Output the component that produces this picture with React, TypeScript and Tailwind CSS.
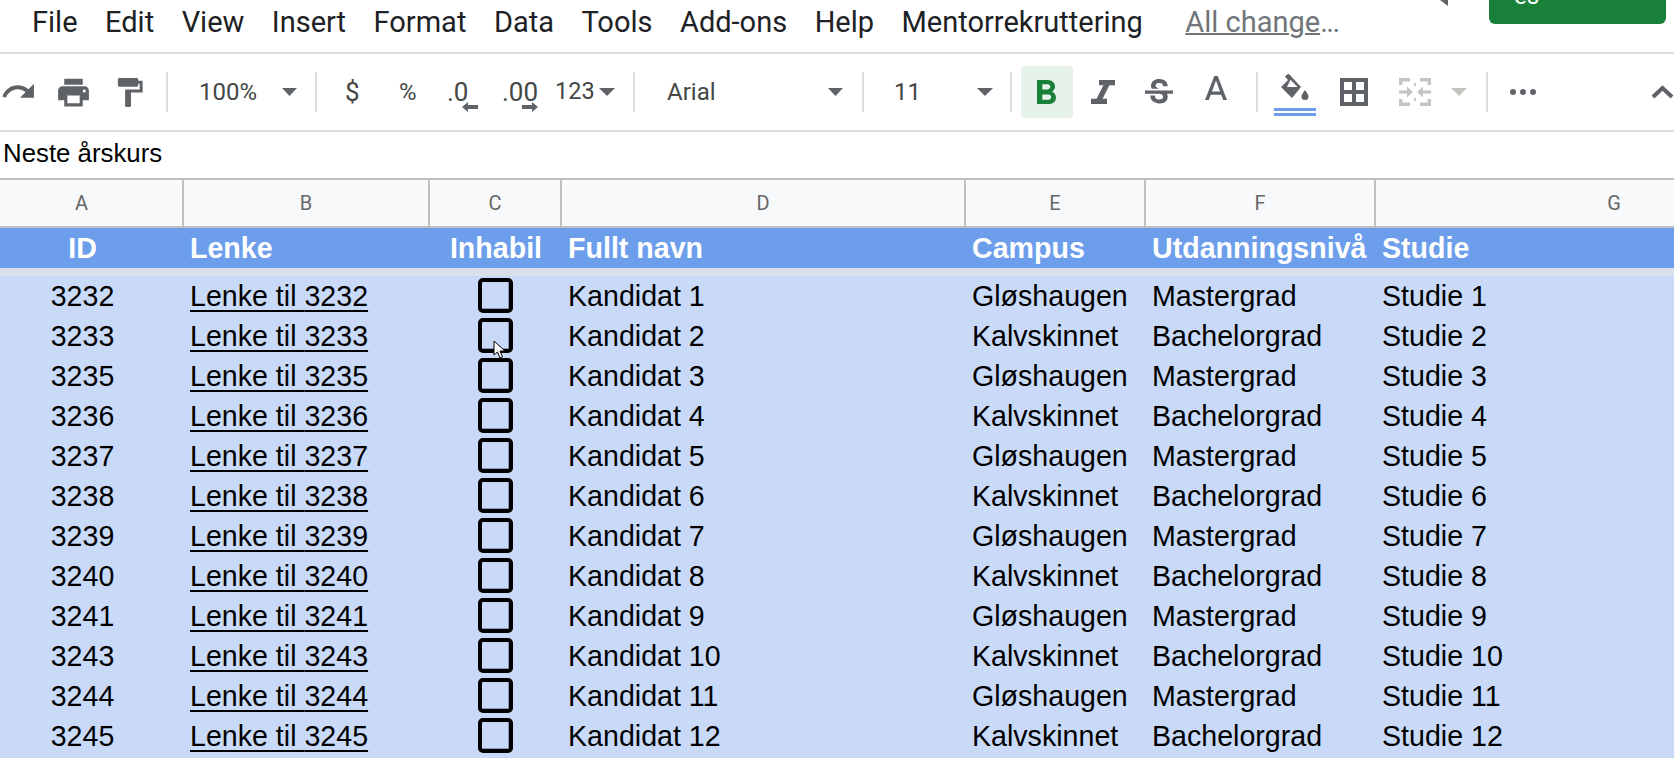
const MENU = ["File","Edit","View","Insert","Format","Data","Tools","Add-ons","Help","Mentorrekruttering"];
const IDS = [3232,3233,3235,3236,3237,3238,3239,3240,3241,3243,3244,3245];
const GRID = "grid grid-cols-[184px_246px_132px_404px_180px_230px_1fr]";
const G = "#5f6368";

function Tri({ className = "", color = G, w = 15, h = 8 }: { className?: string; color?: string; w?: number; h?: number }) {
  return <svg width={w} height={h} viewBox="0 0 15 8" preserveAspectRatio="none" className={`shrink-0 ${className}`}><polygon points="0,0 15,0 7.5,8" fill={color} /></svg>;
}
function Sep({ className = "" }: { className?: string }) {
  return <div className={`w-[2px] h-[40px] bg-[#dadce0] shrink-0 ${className}`} />;
}
function Ic({ vb, w, h, d, className = "", color = G }: { vb: string; w: number; h: number; d: string; className?: string; color?: string }) {
  return <svg width={w} height={h} viewBox={vb} preserveAspectRatio="none" fillRule="evenodd" className={`shrink-0 ${className}`}><path d={d} fill={color} /></svg>;
}
const ROBOTO = "font-['Roboto',sans-serif]";
const ARIAL = "font-['Liberation_Sans',Arial,sans-serif]";

function Toolbar() {
  return (
    <div className={`flex items-center h-[76px] border-b-2 border-[#dadce0] box-content overflow-hidden ${ROBOTO} text-[24px] text-[#444746]`}>
      <Ic className="-mt-[2px]" vb="0 0 24 24" w={37} h={37} d="M18.4 10.6C16.55 8.99 14.15 8 11.5 8c-4.65 0-8.58 3.03-9.96 7.22L3.9 16c1.05-3.19 4.05-5.5 7.6-5.5 1.95 0 3.73.72 5.12 1.88L13 16h9V7l-3.6 3.6z" />
      <Ic className="ml-[18px]" vb="0 0 24 24" w={37} h={37} d="M19 8H5c-1.66 0-3 1.34-3 3v6h4v4h12v-4h4v-6c0-1.66-1.34-3-3-3zm-3 11H8v-5h8v5zm3-7c-.55 0-1-.45-1-1s.45-1 1-1 1 .45 1 1-.45 1-1 1zm-1-9H6v4h12V3z" />
      <Ic className="ml-[20px]" vb="0 0 24 24" w={35} h={35} d="M18 4V3c0-.55-.45-1-1-1H5c-.55 0-1 .45-1 1v4c0 .55.45 1 1 1h12c.55 0 1-.45 1-1V6h1v4H9v11c0 .55.45 1 1 1h2c.55 0 1-.45 1-1v-9h8V4h-3z" />
      <Sep className="ml-[19px]" />
      <span className="ml-[31px] w-[57px] whitespace-nowrap">100%</span>
      <Tri className="ml-[26px]" />
      <Sep className="ml-[18px]" />
      <span className="ml-[28px] w-[14px] text-[26px]">$</span>
      <span className="ml-[40px] w-[18px]">%</span>
      <span className="ml-[30px] w-[20px] relative whitespace-nowrap text-[26px]">.0
        <svg width="16" height="10" viewBox="0 0 16 10" className="absolute left-[15px] top-[29px]"><polygon points="0,5 6,0 6,3 16,3 16,7 6,7 6,10" fill={G} /></svg>
      </span>
      <span className="ml-[35px] w-[32px] relative whitespace-nowrap text-[26px]">.00
        <svg width="16" height="10" viewBox="0 0 16 10" className="absolute left-[20px] top-[29px]"><polygon points="16,5 10,0 10,3 0,3 0,7 10,7 10,10" fill={G} /></svg>
      </span>
      <span className="ml-[21px] w-[39px] text-[23.500px]">123</span>
      <Tri className="ml-[5px]" w={16} />
      <Sep className="ml-[18px]" />
      <span className="ml-[32px] w-[49px]">Arial</span>
      <Tri className="ml-[112px]" />
      <Sep className="ml-[19px]" />
      <span className="ml-[30px] w-[24px]">11</span>
      <Tri className="ml-[59px]" w={16} />
      <Sep className="ml-[17px]" />
      <div className="ml-[9px] w-[52px] h-[52px] rounded-[4px] bg-[#e6f2ea] flex items-center justify-center shrink-0">
        <Ic className="-ml-[1px]" vb="7 4 10.75 14" w={19} h={24} color="#188038" d="M15.6 10.79c.97-.67 1.65-1.77 1.65-2.79 0-2.26-1.75-4-4-4H7v14h7.04c2.09 0 3.71-1.7 3.71-3.79 0-1.52-.86-2.82-2.15-3.42zM10 6.5h3c.83 0 1.5.67 1.5 1.5s-.67 1.5-1.5 1.5h-3v-3zm3.5 9H10v-3h3.5c.83 0 1.5.67 1.5 1.5s-.67 1.5-1.5 1.5z" />
      </div>
      <Ic className="ml-[18px]" vb="6 4 12 14" w={24} h={24} d="M10 4v3h2.21l-3.42 8H6v3h8v-3h-2.21l3.42-8H18V4z" />
      <Ic className="ml-[30px]" vb="3 3 18 16" w={28} h={26} d="M7.24 8.75c-.26-.48-.39-1.03-.39-1.67 0-.61.13-1.16.4-1.67.26-.5.63-.93 1.11-1.29.48-.35 1.05-.63 1.7-.83.66-.19 1.39-.29 2.18-.29.81 0 1.54.11 2.21.34.66.22 1.23.54 1.69.94.47.4.83.88 1.08 1.43.25.55.38 1.15.38 1.81h-3.01c0-.31-.05-.59-.15-.85-.09-.27-.24-.49-.44-.68-.2-.19-.45-.33-.75-.44-.3-.1-.66-.16-1.06-.16-.39 0-.74.04-1.03.13-.29.09-.53.21-.72.36-.19.16-.34.34-.44.55-.1.21-.15.43-.15.66 0 .48.25.88.74 1.21.38.25.77.48 1.41.7H7.39c-.05-.08-.11-.17-.15-.25zM21 12v-2H3v2h9.62c.18.07.4.14.55.2.37.17.66.34.87.51.21.17.35.36.43.57.07.2.11.43.11.69 0 .23-.05.45-.14.66-.09.2-.23.38-.42.53-.19.15-.42.26-.71.35-.29.08-.63.13-1.01.13-.43 0-.83-.04-1.18-.13s-.66-.23-.91-.42c-.25-.19-.45-.44-.59-.75-.14-.31-.25-.76-.25-1.21H6.4c0 .55.08 1.13.24 1.58.16.45.37.85.65 1.21.28.35.6.66.98.92.37.26.78.48 1.22.65.44.17.9.3 1.38.39.48.08.96.13 1.44.13.8 0 1.53-.09 2.18-.28s1.21-.45 1.67-.79c.46-.34.82-.77 1.07-1.27s.38-1.07.38-1.71c0-.6-.1-1.14-.31-1.61-.05-.11-.11-.23-.17-.33H21z" />
      <Ic className="ml-[32px] -mt-[8px]" vb="5.5 3 13 14" w={22} h={24} d="M11 3L5.5 17h2.25l1.12-3h6.25l1.12 3h2.25L13 3h-2zm-1.38 9L12 5.67 14.38 12H9.62z" />
      <Sep className="ml-[29px]" />
      <div className="ml-[16px] w-[42px] shrink-0 self-start mt-[20px] flex flex-col">
        <svg width="30" height="26" viewBox="0 0 30 26" className="ml-[5px]">
          <path d="M10 0L22 13L13 24L2 13L9 6L6 2.500L8 0.500Z M8 13H18.500L11.500 5.800Z" fill={G} fillRule="evenodd" />
          <path d="M26 16C28 19 29.500 20.500 29.500 22.500A3.500 3.500 0 0 1 22.500 22.500C22.500 20.500 24 19 26 16Z" fill={G} />
        </svg>
        <div className="mt-[8px] h-[3px] bg-[#6d9eeb]" />
        <div className="mt-[2px] h-[3px] bg-[#6d9eeb]" />
      </div>
      <Ic className="ml-[24px]" vb="0 0 28 28" w={28} h={28} d="M0 0H28V28H0ZM4 4V12H12V4ZM16 4V12H24V4ZM4 16V24H12V16ZM16 16V24H24V16Z" />
      <Ic className="ml-[31px]" vb="0 0 32 28" w={32} h={28} color="#c4c4c0" d="M0 0h11v3.500H3.500V7H0zM21 0h11v7h-3.500V3.500H21zM0 21h3.500v3.500H11V28H0zM28.500 21H32v7H21v-3.500h7.500zM0 12.500h8V8.500l6 5.500-6 5.500v-4H0zM32 12.500h-8V8.500l-6 5.500 6 5.500v-4h8zM15 5h2v3h-2zM15 20h2v3h-2z" />
      <Tri className="ml-[20px]" w={16} color="#c4c4c0" />
      <Sep className="ml-[19px]" />
      <svg width="26" height="6" viewBox="0 0 26 6" className="ml-[22px] shrink-0"><circle cx="3" cy="3" r="3" fill={G} /><circle cx="13" cy="3" r="3" fill={G} /><circle cx="23" cy="3" r="3" fill={G} /></svg>
      <svg width="23" height="14" viewBox="0 0 23 14" className="ml-[115px] shrink-0"><polyline points="2,12 11.500,3 21,12" fill="none" stroke={G} strokeWidth="4" /></svg>
    </div>
  );
}

function Checkbox({ cursor }: { cursor?: boolean }) {
  return (
    <div className="relative w-[35px] h-[35px] ml-[48px] -mt-[1px] border-[4px] border-black rounded-[5px] shadow-[inset_-1px_-1px_0_#8a99bb]">
      {cursor && (
        <svg width="13" height="19" viewBox="0 0 13 19" className="absolute left-[11px] top-[18px]">
          <path d="M1 1V15L4.500 12L7 18L9.500 17L7 11H12Z" fill="#fff" stroke="#000" strokeWidth="1" />
        </svg>
      )}
    </div>
  );
}

export default function App() {
  return (
    <div className="h-[758px] w-[1674px] overflow-hidden flex flex-col bg-white">
      <div className={`flex items-start h-[52px] shrink-0 pl-[32px] border-b-2 border-[#dadce0] box-content ${ROBOTO} text-[29px] text-[#202124] relative`}>
        <div className="flex gap-[27.500px] items-center h-[46px]">
          {MENU.map((m) => <span key={m} className="whitespace-nowrap">{m}</span>)}
          <span className="ml-[15px] text-[#70757a] whitespace-nowrap"><span className="underline decoration-2">All change</span><span className="tracking-[-1.500px]">...</span></span>
        </div>
        <svg width="8" height="6" viewBox="0 0 8 6" className="absolute left-[1440px] top-0"><polygon points="0,0 8,0 8,6" fill={G} /></svg>
        <div className="absolute left-[1489px] top-0 w-[177px] h-[24px] bg-[#188038] rounded-b-[6px] overflow-hidden pl-[25px]">
          <div className="-mt-[16px] text-white text-[24px] leading-[25px]">es</div>
        </div>
      </div>
      <Toolbar />
      <div className={`h-[46px] shrink-0 flex items-center pl-[3px] pb-[4px] ${ARIAL} text-[25.800px] text-black`}>Neste årskurs</div>
      <div className={`${GRID} h-[46px] shrink-0 bg-[#f8f9fa] border-y-2 border-[#c0c0c0] box-content ${ROBOTO} text-[20px] text-[#666]`}>
        {["A","B","C","D","E","F","G"].map((c, i) => (
          <div key={c} className={`flex items-center justify-center ${i === 0 ? "pr-[19px]" : ""} ${i === 6 ? "w-[476px]" : "border-r-2 border-[#c0c0c0]"}`}>{c}</div>
        ))}
      </div>
      <div className={`${GRID} h-[40px] shrink-0 items-center bg-[#6d9eeb] ${ARIAL} text-[28.600px] font-bold text-white leading-none`}>
        <div className="text-center pr-[19px]">ID</div>
        <div className="pl-[6px]">Lenke</div>
        <div className="text-center whitespace-nowrap">Inhabil</div>
        <div className="pl-[6px]">Fullt navn</div>
        <div className="pl-[6px]">Campus</div>
        <div className="pl-[6px] whitespace-nowrap">Utdanningsnivå</div>
        <div className="pl-[6px]">Studie</div>
      </div>
      <div className="h-[8px] shrink-0 bg-[#d9dfeb]" />
      <div className={`flex-1 bg-[#c9daf8] ${ARIAL} text-[28.600px] text-black leading-none`}>
        {IDS.map((id, i) => {
          const even = i % 2 === 0;
          return (
            <div key={id} className={`${GRID} h-[40px] items-center`}>
              <div className="text-center pr-[19px]">{id}</div>
              <div className="pl-[6px] underline decoration-2 underline-offset-[4px] whitespace-nowrap">Lenke til {id}</div>
              <div><Checkbox cursor={i === 1} /></div>
              <div className="pl-[6px]">Kandidat {i + 1}</div>
              <div className="pl-[6px]">{even ? "Gløshaugen" : "Kalvskinnet"}</div>
              <div className="pl-[6px]">{even ? "Mastergrad" : "Bachelorgrad"}</div>
              <div className="pl-[6px]">Studie {i + 1}</div>
            </div>
          );
        })}
      </div>
    </div>
  );
}
